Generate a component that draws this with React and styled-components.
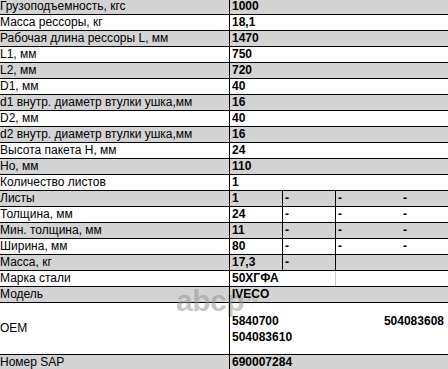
import React from 'react';
import styled, { createGlobalStyle } from 'styled-components';

const GlobalStyle = createGlobalStyle`
    html, body {
        margin: 0;
        padding: 0;
        background: #fff;
    }
    body {
        font-family: "Liberation Sans", Arial, sans-serif;
        color: #000;
    }
`;

const specs = [
    ['Грузоподъемность, кгс', '1000'],
    ['Масса рессоры, кг', '18,1'],
    ['Рабочая длина рессоры L, мм', '1470'],
    ['L1, мм', '750'],
    ['L2, мм', '720'],
    ['D1, мм', '40'],
    ['d1 внутр. диаметр втулки ушка,мм', '16'],
    ['D2, мм', '40'],
    ['d2 внутр. диаметр втулки ушка,мм', '16'],
    ['Высота пакета H, мм', '24'],
    ['Ho, мм', '110'],
    ['Количество листов', '1'],
];

// leaf rows: value, then three dashes
const leaves = [
    ['Листы', '1'],
    ['Толщина, мм', '24'],
    ['Мин. толщина, мм', '11'],
    ['Ширина, мм', '80'],
];

const oem = ['5840700', '504083608', '504083610'];

function App() {
    let index = 0;
    const shade = () => index++ % 2 === 0;

    return (
        <>
            <GlobalStyle />
            <Page>
                <Sheet>
                    {specs.map(([label, value]) => (
                        <Row key={label} $shade={shade()}>
                            <Label>{label}</Label>
                            <Value $span={4}>{value}</Value>
                        </Row>
                    ))}
                    {leaves.map(([label, value]) => (
                        <Row key={label} $shade={shade()}>
                            <Label>{label}</Label>
                            <Value>{value}</Value>
                            <Value>-</Value>
                            <Value>-</Value>
                            <Value $line="none">-</Value>
                        </Row>
                    ))}
                    <Row $shade={shade()}>
                        <Label>Масса, кг</Label>
                        <Value>17,3</Value>
                        <Value>-</Value>
                        <Value $span={2}></Value>
                    </Row>
                    <Row $shade={shade()}>
                        <Label>Марка стали</Label>
                        <Value $span={2}>50ХГФА</Value>
                        <Value $span={2} $line="light"></Value>
                    </Row>
                    <Row $shade={shade()}>
                        <Label>Модель</Label>
                        <Value $span={4}>IVECO</Value>
                    </Row>
                    <Row $shade={shade()} $tall>
                        <Label>OEM</Label>
                        <Value $span={4}>
                            <NumberList>
                                {oem.map((n) => (
                                    <span key={n}>{n}</span>
                                ))}
                            </NumberList>
                        </Value>
                    </Row>
                    <Row $shade={shade()}>
                        <Label>Номер SAP</Label>
                        <Value $span={4}>690007284</Value>
                    </Row>
                    <Watermark>
                        abcp<small>.ru</small>
                    </Watermark>
                </Sheet>
            </Page>
        </>
    );
}

const Page = styled.div`
    width: 448px;
    height: 369px;
    overflow: hidden;
`;

const Sheet = styled.div`
    position: relative;
    margin-top: -2px;
    display: flex;
    flex-direction: column;
`;

const Row = styled.div`
    display: grid;
    grid-template-columns: 229px 53px 53px 65px 1fr;
    border-top: 1px solid #000;
    height: ${(p) => (p.$tall ? '51px' : '15px')};
    background: ${(p) => (p.$shade ? '#d3d3d3' : '#fff')};
`;

const Label = styled.div`
    position: relative;
    z-index: 2;
    display: flex;
    align-items: center;
    font-size: 12px;
    line-height: 15px;
    white-space: nowrap;
`;

const Value = styled.div`
    position: relative;
    z-index: 2;
    grid-column: span ${(p) => p.$span || 1};
    display: flex;
    align-items: center;
    padding-left: 2px;
    font-size: 12px;
    line-height: 15px;
    font-weight: bold;
    white-space: nowrap;
    border-left: 1px solid
        ${(p) => (p.$line === 'none' ? 'transparent' : p.$line === 'light' ? '#c8c8c8' : '#000')};
`;

const NumberList = styled.div`
    flex: 1;
    display: grid;
    grid-template-columns: 1fr auto;
    padding-right: 4px;
    line-height: 16px;
`;

const Watermark = styled.div`
    position: absolute;
    z-index: 1;
    left: 176px;
    top: 286px;
    font-size: 30px;
    font-weight: bold;
    letter-spacing: -0.5px;
    color: rgba(150, 150, 150, 0.55);
    pointer-events: none;

    small {
        font-size: 12px;
        font-weight: normal;
        vertical-align: 10px;
        margin-left: 1px;
    }
`;

export default App;
